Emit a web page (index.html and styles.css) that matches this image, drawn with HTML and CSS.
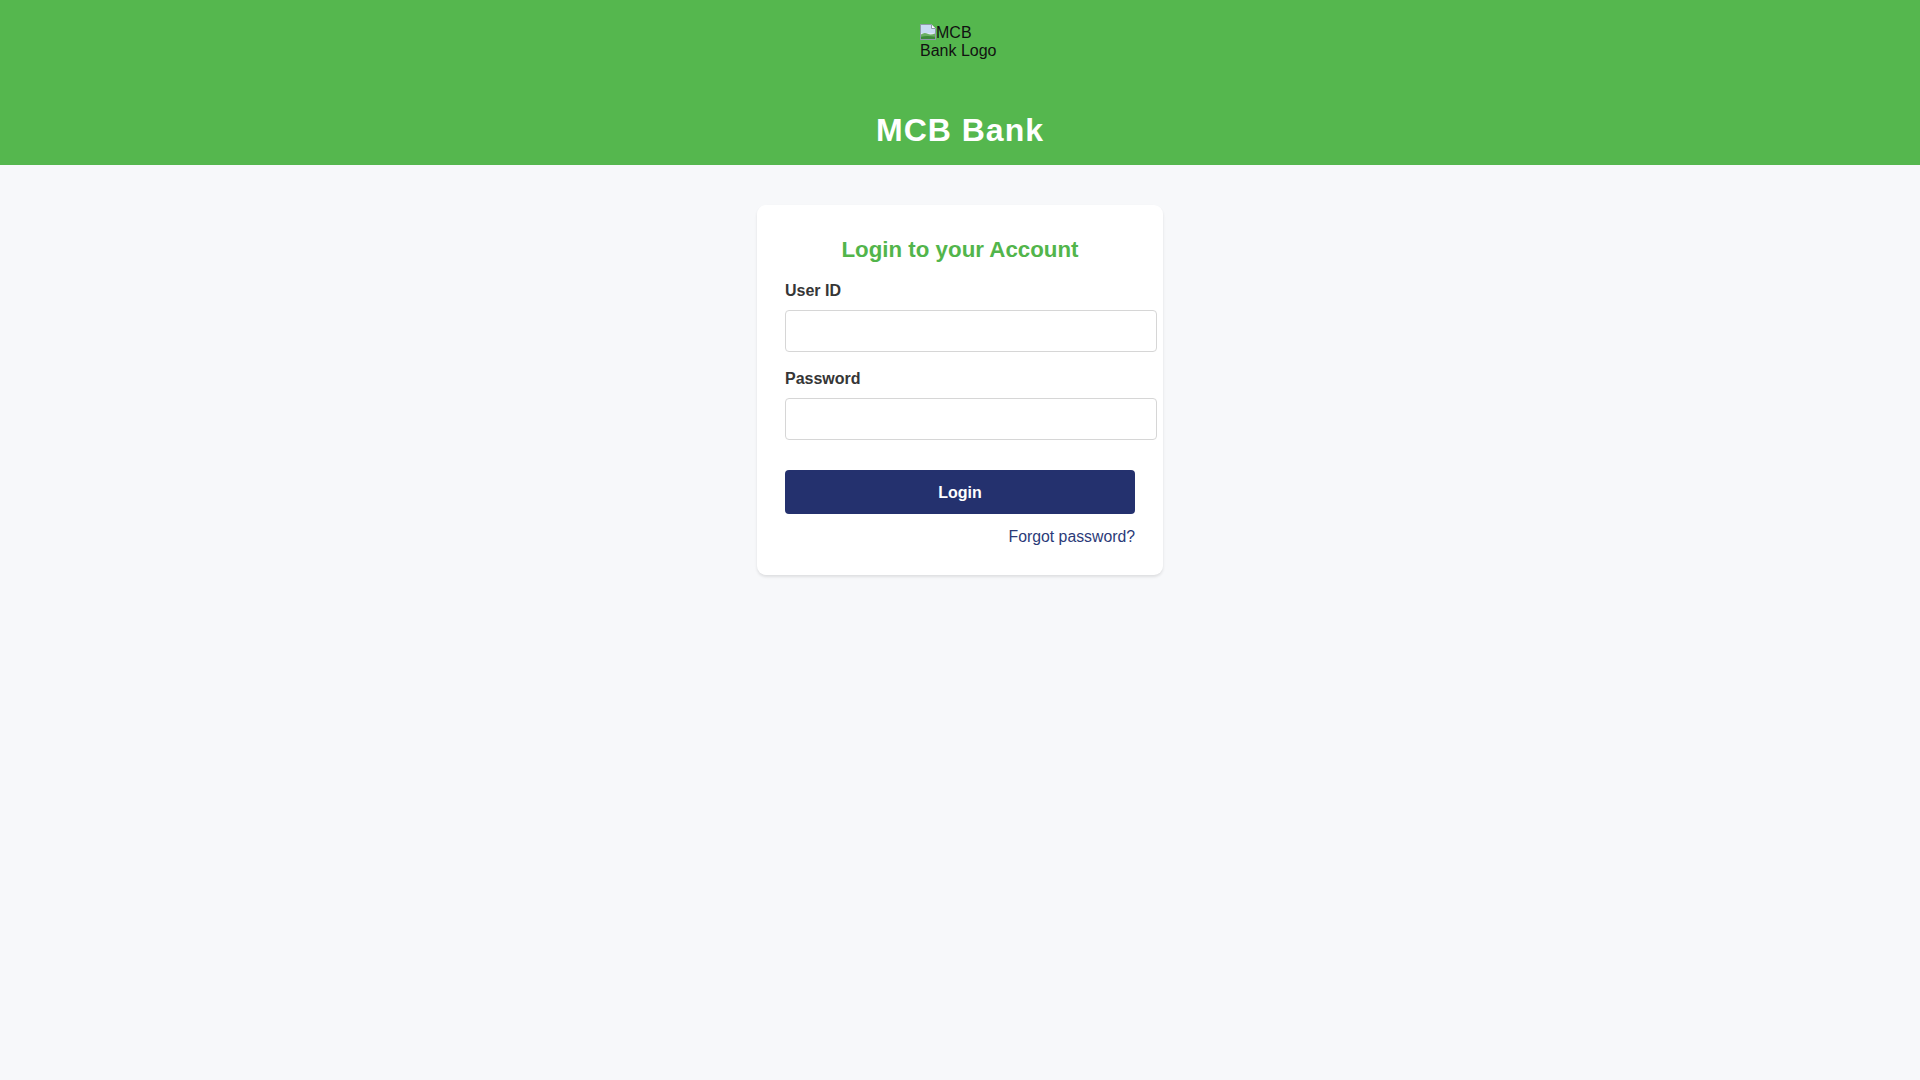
FILE: index.html
```html
<!DOCTYPE html>
<html lang="en">
<head>
<meta charset="utf-8">
<title>MCB Bank - Login</title>
<link rel="stylesheet" href="styles.css">
</head>
<body>
<header class="site-header">
  <div class="logo" role="img" aria-label="MCB Bank Logo">
    <svg class="broken-icon" width="16" height="16" viewBox="0 0 16 16" aria-hidden="true">
      <path d="M0.5 0.5h11l4 4v11H0.5z" fill="#dfe8f5" stroke="#8f99aa" stroke-width="1"/>
      <path d="M11.5 0.5v4h4" fill="#ffffff" stroke="#8f99aa" stroke-width="1"/>
      <path d="M1 1h10v4h4v4H1z" fill="#c9dcf4"/>
      <path d="M1 15V10.5c2.2-1.8 4.4-2 6.6-0.7 2 1.1 4.4 1 7.4-0.4V15z" fill="#6bb063"/>
      <path d="M1 15v-2.2c4-1.2 9-1.2 14 0V15z" fill="#3d8a3a"/>
    </svg><span class="alt-text">MCB Bank Logo</span>
  </div>
  <h1 class="brand">MCB Bank</h1>
</header>

<main class="page">
  <section class="card">
    <h2 class="card-title">Login to your Account</h2>
    <form class="login-form" onsubmit="return false;">
      <label class="field-label" for="userid">User ID</label>
      <input class="field-input" id="userid" type="text">
      <label class="field-label second" for="password">Password</label>
      <input class="field-input" id="password" type="password">
      <button class="login-btn" type="submit">Login</button>
      <div class="forgot-row"><a class="forgot-link" href="#">Forgot password?</a></div>
    </form>
  </section>
</main>
</body>
</html>
```

FILE: styles.css
```css
html, body {
  margin: 0;
  padding: 0;
}

body {
  background: #f7f8fa;
  font-family: "Liberation Sans", Arial, sans-serif;
  min-height: 100vh;
}

.site-header {
  background: #55b74e;
  padding: 24px 0 16px;
  display: flex;
  flex-direction: column;
  align-items: center;
}

.logo {
  width: 80px;
  height: 80px;
  font-size: 16px;
  line-height: 18px;
  color: #111111;
  overflow: hidden;
}

.broken-icon {
  display: inline-block;
  vertical-align: -2px;
  width: 16px;
  height: 16px;
}

.brand {
  margin: 8px 0 0;
  font-size: 32px;
  line-height: 37px;
  font-weight: 700;
  letter-spacing: 1px;
  color: #ffffff;
}

.page {
  display: flex;
  justify-content: center;
  padding-top: 40px;
}

.card {
  width: 350px;
  padding: 28px 28px 29px;
  background: #ffffff;
  border-radius: 9px;
  box-shadow: 0 2px 3px rgba(0, 0, 0, 0.10);
}

.card-title {
  margin: 4px 0 20px;
  text-align: center;
  font-size: 22.3px;
  line-height: 25px;
  font-weight: 700;
  color: #52b54b;
}

.login-form {
  display: flex;
  flex-direction: column;
  align-items: flex-start;
}

.field-label {
  font-size: 16px;
  line-height: 18px;
  font-weight: 700;
  color: #363636;
  margin-bottom: 10px;
}

.field-label.second {
  margin-top: 18px;
}

.field-input {
  width: 350px;
  box-sizing: content-box;
  padding: 10px;
  font-size: 16px;
  line-height: 20px;
  height: 20px;
  border: 1px solid #d6d6d6;
  border-radius: 4px;
  background: #ffffff;
  font-family: "Liberation Sans", Arial, sans-serif;
  margin: 0;
}

.login-btn {
  margin-top: 30px;
  width: 100%;
  height: 44px;
  padding: 2px 0 0;
  border: none;
  border-radius: 4px;
  background: #24316e;
  color: #ffffff;
  font-family: "Liberation Sans", Arial, sans-serif;
  font-size: 16px;
  font-weight: 700;
  cursor: pointer;
}

.forgot-row {
  width: 100%;
  display: flex;
  justify-content: flex-end;
  margin-top: 14px;
}

.forgot-link {
  font-size: 15.8px;
  line-height: 18px;
  color: #2b3a78;
  text-decoration: none;
}
```
